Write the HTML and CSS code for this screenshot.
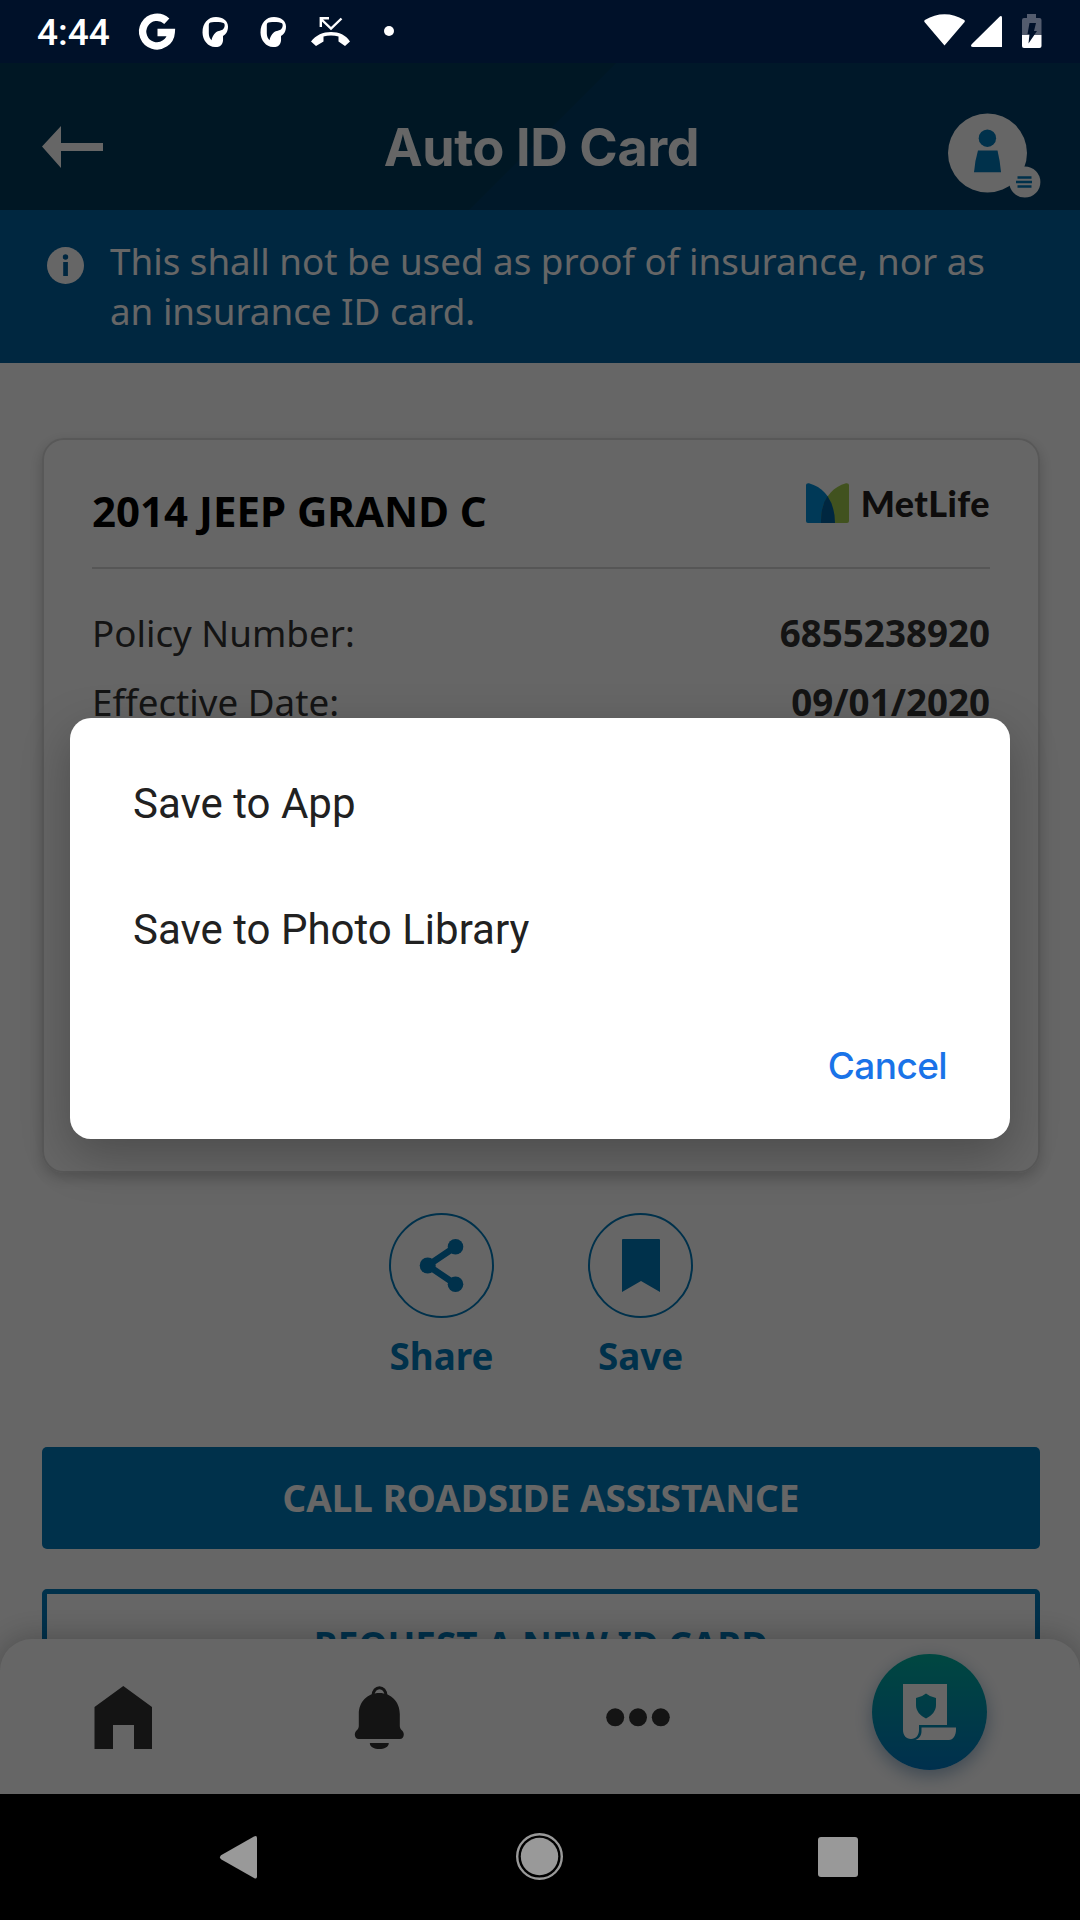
FILE: index.html
```html
<!DOCTYPE html>
<html lang="en">
<head>
<meta charset="utf-8">
<title>Auto ID Card</title>
<link rel="stylesheet" href="styles.css">
</head>
<body>
<div class="screen">
  <div class="statusbar">
    <span class="clock">4:44</span>
    <svg class="status-left" width="270" height="63" viewBox="130 0 270 63">
      <path d="M166.800 21.200A14.300 14.300 0 1 0 171.200 32.500H157.500" fill="none" stroke="#fff" stroke-width="7.400"/>
      <g id="p-icon" fill="#fff">
        <path fill-rule="evenodd" d="M216 17c7 0 12 4 12 9.500 0 5-2 7.500-5 9.500 0 3 .5 5.500-1 8-1.500 2.500-3.500 3-7 3-7 0-12.500-7-12.500-14.500C202.500 23 208 17 216 17zM212 22.200c-2.500.3-3.200 1-3.200 3v8c0 3 1 5 2.700 7 .5-3 2-6 4.500-8 2-1.500 6-1.500 7.500-3.500 1.500-2 1.500-4.500.5-5.500-2-1.300-8-1.400-12-1z"/>
      </g>
      <use href="#p-icon" x="58"/>
      <path d="M341.500 18.500L331 28.500L321.500 19.500M320.800 27V18.300H329" fill="none" stroke="#fff" stroke-width="2.400"/>
      <path d="M311 41.500C316 35 323 32 331 32s15 3 19 9.500L345 46l-6.500-4.500V36.500c-4.500-1.500-10.500-1.500-15 0v5L316 46z" fill="#fff"/>
      <circle cx="389" cy="31" r="5" fill="#fff"/>
    </svg>
    <svg class="status-right" width="130" height="63" viewBox="920 0 130 63">
      <path d="M944.500 45.500L924.500 22c-.5-1-.3-1.500.8-2.200 11.500-7.500 27-7.500 38.500 0 1.100.7 1.300 1.200.8 2.200z" fill="#fff"/>
      <path d="M1002 18v29h-29c-2 0-2.600-1.500-1.300-2.800L999.500 16.800c1.200-1.200 2.500-.8 2.500 1.200z" fill="#fff"/>
      <path d="M1027 14h9v4h3.500q2 0 2 2v15h-19.500V20q0-2 2-2h3z" fill="#535c6e"/>
      <path d="M1022 35h19.500v11q0 2-2 2h-15.500q-2 0-2-2z" fill="#fff"/>
      <path d="M1029.500 23h6.500l-2 8h3l-8.500 12.500 1-9.500h-2z" fill="#00112a"/>
    </svg>
  </div>

  <header class="header">
    <svg class="back" width="62" height="43" viewBox="42 125 62 43"><path d="M42 146.500L61 126v17h42v8H61v17z" fill="#fff"/></svg>
    <h1 class="title">Auto ID Card</h1>
    <svg class="avatar" width="94" height="86" viewBox="948 113.500 94 86">
      <circle cx="987.500" cy="153.500" r="39.500" fill="#fff"/>
      <circle cx="1024.800" cy="182.500" r="15.600" fill="#fff"/>
      <circle cx="987.400" cy="138.700" r="8.700" fill="#007abc"/>
      <path d="M978 151h19.500q2.500 10 3.500 21.700h-27q1-12 4-21.700z" fill="#007abc"/>
      <path d="M1017.500 178h14M1016 182.500h16M1017.500 187h14" stroke="#007abc" stroke-width="2.300"/>
    </svg>
  </header>

  <section class="notice">
    <svg width="37" height="37" viewBox="0 0 37 37"><circle cx="18.500" cy="18.500" r="18.500" fill="#fff"/><circle cx="18.500" cy="10" r="2.700" fill="#0061a0"/><path d="M16.200 15h4.700v14h-4.700z" fill="#0061a0"/></svg>
    <p>This shall not be used as proof of insurance, nor as an insurance ID card.</p>
  </section>

  <main class="content">
    <article class="card">
      <div class="card-head">
        <h2>2014 JEEP GRAND C</h2>
        <div class="brand">
          <svg width="43" height="40" viewBox="0 0 43 40">
            <path d="M0 2Q0 0 3 .3C20 5 29 20 29 40H2Q0 40 0 38z" fill="#0090da"/>
            <path d="M43 2Q43 0 40 .3C24 5 15 18 15 40H41Q43 40 43 38z" fill="#a4ce4e"/>
            <path d="M21.500 13Q29 24 29 40H15Q14.500 23 21.500 13z" fill="#0061a0"/>
          </svg>
          <span>MetLife</span>
        </div>
      </div>
      <dl class="facts">
        <div><dt>Policy Number:</dt><dd>6855238920</dd></div>
        <div><dt>Effective Date:</dt><dd>09/01/2020</dd></div>
      </dl>
    </article>

    <div class="actions">
      <div class="action">
        <span class="ring"><svg width="60" height="60" viewBox="412 1236 60 60"><path d="M455.500 1246.700L427.700 1265.500L455.500 1284.200" fill="none" stroke="#007abc" stroke-width="6.500"/><g fill="#007abc"><circle cx="427.700" cy="1265.500" r="8"/><circle cx="455.500" cy="1246.700" r="7.800"/><circle cx="455.500" cy="1284.200" r="7.800"/></g></svg></span>
        <span>Share</span>
      </div>
      <div class="action">
        <span class="ring"><svg width="38" height="53" viewBox="0 0 38 53"><path d="M1 0h36q1 0 1 1v52L19 42 0 53V1Q0 0 1 0z" fill="#007abc"/></svg></span>
        <span>Save</span>
      </div>
    </div>

    <div class="button primary">CALL ROADSIDE ASSISTANCE</div>
    <div class="button outline">REQUEST A NEW ID CARD</div>
  </main>

  <nav class="tabs">
    <svg width="1080" height="155" viewBox="0 1639 1080 155">
      <g fill="#333">
        <path d="M123.300 1686L152 1707v42h-18v-24h-21v24H94.500v-42z"/>
        <path d="M379.300 1693c12 0 20.500 9 20.500 21v12c0 4 4 4.500 4 8.500 0 2.500-1.500 4.500-4 4.500h-41c-2.500 0-4-2-4-4.500 0-4 4-4.500 4-8.500v-12c0-12 8.500-21 20.500-21zM369.800 1743h19c0 8-19 8-19 0z"/>
        <circle cx="615.200" cy="1717.300" r="9"/><circle cx="638" cy="1717.300" r="9"/><circle cx="660.800" cy="1717.300" r="9"/>
      </g>
      <path d="M373 1696c0-11 13-11 13 0" fill="none" stroke="#333" stroke-width="3"/>
    </svg>
    <span class="fab"><svg width="56" height="60" viewBox="902 1682 56 60">
      <path fill="#fff" fill-rule="evenodd" d="M903 1684h44v41h-28v5c0 5-3 9-8 9s-8-4-8-9zM926 1693.500q4 3.500 10 4.500v7c0 6-4 10.500-10 13.500-6-3-10-7.500-10-13.500v-7q6-1 10-4.500z"/>
      <path fill="#fff" d="M921.500 1727.500H956v2c0 6-3 10.500-7 10.500h-33.500c4-1.500 6-5 6-9z"/>
    </svg></span>
  </nav>

  <div class="scrim"></div>

  <div class="dialog">
    <div class="option">Save to App</div>
    <div class="option">Save to Photo Library</div>
    <div class="dialog-actions"><span>Cancel</span></div>
  </div>

  <div class="navbar">
    <svg width="1080" height="126" viewBox="0 1794 1080 126">
      <g fill="#999">
        <path d="M254 1836.500q3-1.500 3 1.500v38.500q0 3-3 1.500l-33-18.800q-2-2 0-4z"/>
        <circle cx="539.500" cy="1856.500" r="18.700"/>
        <rect x="818" y="1837" width="40" height="40" rx="3"/>
      </g>
      <circle cx="539.500" cy="1856.500" r="22.300" fill="none" stroke="#999" stroke-width="2.400"/>
    </svg>
  </div>
</div>
</body>
</html>
```
FILE: styles.css
```css
* { box-sizing: border-box; margin: 0; padding: 0; }

body { background: #000; }

svg { display: block; flex: none; }

.screen {
  position: relative;
  display: flex;
  flex-direction: column;
  width: 1080px;
  height: 1920px;
  overflow: hidden;
  background: #fff;
  font-family: "Noto Sans", sans-serif;
  font-size: 36.75px;
}

.statusbar {
  position: relative;
  z-index: 3;
  display: flex;
  flex: none;
  height: 63px;
  padding: 0 30px 0 37px;
  background: #001129;
  color: #fff;
}

.clock {
  width: 93px;
  font: 500 37px/66px Roboto, sans-serif;
}

.status-right { margin-left: auto; }

.header {
  display: flex;
  flex: none;
  align-items: center;
  justify-content: space-between;
  height: 147px;
  padding: 20px 38px 0 42px;
  background: linear-gradient(135deg, #003a5a 50.15%, #003d66 50.25%);
  color: #fff;
}

.header .back { margin-bottom: 1px; }

.title {
  margin-left: 31px;
  padding-top: 3px;
  font: 700 52px/60px Inter, sans-serif;
  letter-spacing: -0.35px;
}

.header .avatar { margin-top: 19px; }

.notice {
  display: flex;
  flex: none;
  gap: 26px;
  height: 153px;
  padding: 26px 47px 0;
  background: #0061a0;
  color: #fff;
}

.notice svg { margin-top: 11px; }

.notice p { line-height: 50px; }

.content {
  flex: 1;
  min-height: 0;
  padding: 75px 40px 0 42px;
  overflow: hidden;
}

.card {
  height: 735px;
  padding: 0 48px;
  border: 2px solid #dcdcdc;
  border-radius: 22px;
  box-shadow: 0 5px 14px rgba(0, 0, 0, .2);
}

.card-head {
  display: flex;
  justify-content: space-between;
  height: 129px;
  border-bottom: 2px solid #d8d8d8;
}

.card-head h2 {
  color: #000;
  font-size: 42px;
  line-height: 142px;
}

.brand {
  display: flex;
  gap: 12px;
  height: 40px;
  margin-top: 43px;
  color: #231f20;
  font: 900 36px/40px Lato, sans-serif;
  letter-spacing: 0.4px;
}

.facts { padding-top: 30px; color: #333; }

.facts div {
  display: flex;
  justify-content: space-between;
  line-height: 69px;
}

.facts dd { font-weight: 700; }

.actions {
  display: flex;
  justify-content: center;
  gap: 94px;
  margin-top: 40px;
  color: #007abc;
  font-weight: 700;
}

.action {
  display: flex;
  flex-direction: column;
  align-items: center;
  width: 105px;
  line-height: 50px;
  gap: 13px;
}

.ring {
  display: flex;
  align-items: center;
  justify-content: center;
  width: 105px;
  height: 105px;
  border: 2px solid #007abc;
  border-radius: 50%;
}

.button {
  height: 102px;
  margin-top: 66px;
  border-radius: 5px;
  font-weight: 700;
  line-height: 102px;
  text-align: center;
}

.primary {
  background: #007abc;
  color: #fff;
  letter-spacing: 0.1px;
}

.outline {
  height: 112px;
  margin-top: 40px;
  border: 5px solid #007abc;
  color: #007abc;
}

.tabs {
  position: relative;
  flex: none;
  height: 155px;
  border-radius: 32px 32px 0 0;
  background: #fff;
  box-shadow: 0 0 32px rgba(0, 0, 0, .28);
}

.fab {
  position: absolute;
  top: 15px;
  left: 872px;
  display: flex;
  align-items: center;
  justify-content: center;
  width: 115px;
  height: 116px;
  border-radius: 50%;
  background: linear-gradient(#00b2a2, #0078c2);
  box-shadow: 0 6px 18px rgba(0, 70, 130, .4);
}

.scrim {
  position: absolute;
  z-index: 1;
  inset: 0;
  background: rgba(0, 0, 0, .6);
}

.dialog {
  position: absolute;
  z-index: 2;
  top: 718px;
  left: 70px;
  width: 940px;
  height: 421px;
  padding: 23px 63px 0;
  border-radius: 21px;
  background: #fff;
  box-shadow: 0 16px 48px rgba(0, 0, 0, .26);
  color: #212121;
}

.option { font: 400 42px/126px Roboto, sans-serif; }

.dialog-actions {
  display: flex;
  justify-content: flex-end;
  color: #1a73e8;
  font: 500 37px/145px Inter, sans-serif;
  letter-spacing: -0.6px;
}

.navbar {
  position: relative;
  z-index: 3;
  flex: none;
  height: 126px;
  background: #000;
}
```
